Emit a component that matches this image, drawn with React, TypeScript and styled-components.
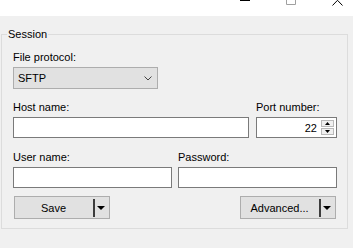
import React from "react";
import styled, { createGlobalStyle } from "styled-components";

const Global = createGlobalStyle`
  html, body { margin: 0; padding: 0; background: #f0f0f0; }
  body { font-family: "Liberation Sans", Arial, sans-serif; font-size: 11px; color: #000; overflow: hidden; }
  * { box-sizing: border-box; }
`;

const Page = styled.div`
  width: 353px;
  height: 248px;
  display: flex;
  flex-direction: column;
  background: #f0f0f0;
`;

const TitleBar = styled.div`
  height: 16px;
  background: #fff;
  display: flex;
  justify-content: flex-end;
  margin-right: -7px;
`;

const TitleButton = styled.div`
  width: 46px;
  height: 16px;
  display: flex;
  justify-content: center;
  align-items: flex-start;
`;

const Group = styled.fieldset`
  margin: 11px 5px 0 1px;
  padding: 9px 10px 9px 11px;
  border: 1px solid #dcdcdc;
  min-width: 0;
  display: flex;
  flex-direction: column;
`;

const Legend = styled.legend`
  margin-left: -6px;
  padding: 0 1px;
  line-height: 14px;
  font-size: 11px;
`;

const Label = styled.div`
  line-height: 14px;
  height: 14px;
  margin-bottom: 3px;
  white-space: nowrap;
`;

const Field = styled.div`
  display: flex;
  flex-direction: column;
  min-width: 0;
`;

const Combo = styled.div`
  width: 145px;
  height: 22px;
  background: #e1e1e1;
  border: 1px solid #adadad;
  display: flex;
  align-items: center;
  justify-content: space-between;
  padding: 0 5px 0 4px;
`;

const Row = styled.div<{ $cols: string; $gap: number; $top: number }>`
  display: grid;
  grid-template-columns: ${(p) => p.$cols};
  column-gap: ${(p) => p.$gap}px;
  margin-top: ${(p) => p.$top}px;
`;

const Input = styled.div<{ $right?: boolean }>`
  height: 21px;
  background: #fff;
  border: 1px solid #7a7a7a;
  display: flex;
  align-items: center;
  justify-content: ${(p) => (p.$right ? "flex-end" : "flex-start")};
  padding: 0 2px 0 3px;
`;

const Spin = styled.div`
  display: flex;
  flex-direction: column;
  gap: 1px;
  margin-left: 4px;
`;

const SpinBtn = styled.div`
  width: 13px;
  height: 7px;
  background: #f0f0f0;
  border: 1px solid #b9b9b9;
  display: flex;
  align-items: center;
  justify-content: center;
`;

const ButtonRow = styled.div`
  display: flex;
  justify-content: space-between;
  margin-top: 8px;
  padding: 0 1px;
`;

const SplitButton = styled.div`
  width: 96px;
  height: 23px;
  background: #e1e1e1;
  border: 1px solid #adadad;
  display: flex;
  align-items: center;
`;

const BtnText = styled.div`
  flex: 1;
  text-align: center;
  line-height: 14px;
`;

const Divider = styled.div`
  width: 2px;
  height: 18px;
  background: #3c3c3c;
  margin: 0 2px 0 1px;
`;

const Arrow = styled.div`
  width: 0;
  height: 0;
  border-left: 4px solid transparent;
  border-right: 4px solid transparent;
  border-top: 4px solid #000;
  margin-right: 4px;
`;

const Tri = ({ up }: { up?: boolean }) => (
  <svg width="5" height="3" viewBox="0 0 5 3">
    <path d={up ? "M2.5 0 L5 3 L0 3 Z" : "M0 0 L5 0 L2.5 3 Z"} fill="#000" />
  </svg>
);

export default function App() {
  return (
    <>
      <Global />
      <Page>
        <TitleBar>
          <TitleButton>
            <svg width="10" height="2" viewBox="0 0 10 2">
              <rect x="0" y="0" width="10" height="1" fill="#000" />
            </svg>
          </TitleButton>
          <TitleButton>
            <svg width="10" height="5" viewBox="0 0 10 5">
              <path d="M0.5 0 V4.5 H9.5 V0" fill="none" stroke="#a0a0a0" strokeWidth="1" />
            </svg>
          </TitleButton>
          <TitleButton>
            <svg width="11" height="6" viewBox="0 0 11 6">
              <path d="M5.5 0.3 L0.5 5.5 M5.5 0.3 L10.5 5.5" fill="none" stroke="#000" strokeWidth="1" />
            </svg>
          </TitleButton>
        </TitleBar>
        <Group>
          <Legend>Session</Legend>
          <Field>
            <Label>File protocol:</Label>
            <Combo>
              <span>SFTP</span>
              <svg width="8" height="5" viewBox="0 0 8 5">
                <path d="M0.5 0.5 L4 4 L7.5 0.5" fill="none" stroke="#444" strokeWidth="1" />
              </svg>
            </Combo>
          </Field>
          <Row $cols="1fr 81px" $gap={7} $top={11}>
            <Field>
              <Label>Host name:</Label>
              <Input />
            </Field>
            <Field>
              <Label>Port number:</Label>
              <Input $right>
                <span>22</span>
                <Spin>
                  <SpinBtn>
                    <Tri up />
                  </SpinBtn>
                  <SpinBtn>
                    <Tri />
                  </SpinBtn>
                </Spin>
              </Input>
            </Field>
          </Row>
          <Row $cols="1fr 1fr" $gap={6} $top={12}>
            <Field>
              <Label>User name:</Label>
              <Input />
            </Field>
            <Field>
              <Label>Password:</Label>
              <Input />
            </Field>
          </Row>
          <ButtonRow>
            <SplitButton>
              <BtnText>Save</BtnText>
              <Divider />
              <Arrow />
            </SplitButton>
            <SplitButton>
              <BtnText>Advanced...</BtnText>
              <Divider />
              <Arrow />
            </SplitButton>
          </ButtonRow>
        </Group>
      </Page>
    </>
  );
}
